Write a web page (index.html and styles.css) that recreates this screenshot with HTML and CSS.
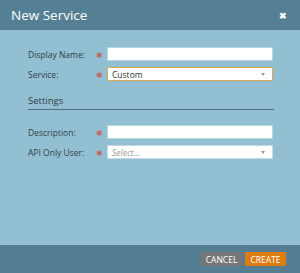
FILE: index.html
```html
<!DOCTYPE html>
<html lang="en">
<head>
    <meta charset="UTF-8">
    <title>New Service</title>
    <link rel="stylesheet" href="styles.css">
</head>
<body>
    <div class="dialog">
        <div class="dialog-header">
            <span class="dialog-title">New Service</span>
            <span class="close">&#10006;</span>
        </div>
        <div class="dialog-body">
            <div class="row">
                <label>Display Name:</label>
                <span class="req">&#10033;</span>
                <input type="text" class="field">
            </div>
            <div class="row">
                <label>Service:</label>
                <span class="req">&#10033;</span>
                <div class="field select active">Custom<span class="caret"></span></div>
            </div>
            <div class="section">Settings</div>
            <div class="row">
                <label>Description:</label>
                <span class="req">&#10033;</span>
                <input type="text" class="field">
            </div>
            <div class="row">
                <label>API Only User:</label>
                <span class="req">&#10033;</span>
                <div class="field select placeholder">Select...<span class="caret"></span></div>
            </div>
        </div>
        <div class="dialog-footer">
            <button class="btn cancel">CANCEL</button>
            <button class="btn create">CREATE</button>
        </div>
    </div>
</body>
</html>
```
FILE: styles.css
```css
body {
    margin: 0;
    font-family: "Open Sans", sans-serif;
}
.dialog {
    width: 300px;
    height: 273px;
    display: flex;
    flex-direction: column;
    background-color: #93bfd2;
}
.dialog-header {
    height: 30px;
    background-color: #547f94;
    display: flex;
    align-items: center;
    justify-content: space-between;
    padding: 0 13px 0 11px;
    color: #fff;
}
.dialog-title {
    font-size: 13.5px;
}
.close {
    font-size: 9px;
    font-weight: bold;
}
.dialog-body {
    flex: 1;
    padding: 17px 26px 0 28px;
}
.row {
    display: flex;
    align-items: center;
    height: 14px;
    margin-bottom: 6px;
}
.row label {
    width: 68px;
    font-size: 8.5px;
    color: #2f3f4a;
}
.req {
    width: 11px;
    font-size: 8px;
    color: #c26664;
}
.field {
    box-sizing: border-box;
    width: 166px;
    height: 14px;
    margin: 0;
    padding: 0 4px;
    border: 1px solid #b8d8e6;
    background-color: #fff;
    font-family: "Open Sans", sans-serif;
    font-size: 8.5px;
    color: #333;
}
.select {
    display: flex;
    align-items: center;
    justify-content: space-between;
}
.active {
    border-color: #e2a455;
}
.placeholder {
    color: #999;
    font-style: italic;
    border-color: #c6dbe4;
}
.caret {
    width: 0;
    height: 0;
    border-left: 2.5px solid transparent;
    border-right: 2.5px solid transparent;
    border-top: 3px solid #999;
    margin-right: 3px;
}
.section {
    margin-top: 13px;
    padding-bottom: 2px;
    border-bottom: 1px solid #4f6f7e;
    font-size: 9.5px;
    color: #2f3f4a;
    margin-bottom: 15px;
}
.dialog-footer {
    height: 28px;
    background-color: #557e92;
    display: flex;
    align-items: center;
    justify-content: flex-end;
    gap: 3px;
    padding-right: 14px;
}
.btn {
    height: 14px;
    padding: 0;
    border: none;
    color: #fff;
    font-family: "Open Sans", sans-serif;
    font-size: 8.5px;
    cursor: pointer;
}
.cancel {
    width: 41px;
    background-color: #777;
}
.create {
    width: 41px;
    background-color: #de7c10;
}
```
